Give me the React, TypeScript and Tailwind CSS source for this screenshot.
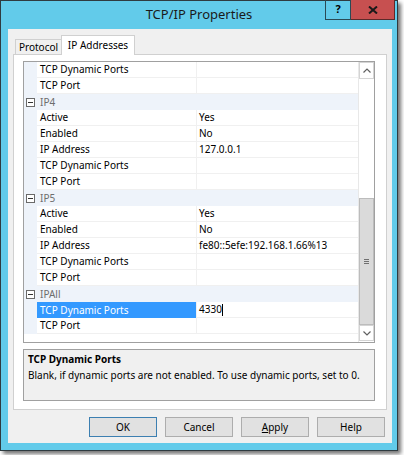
import React from "react";

type Row = { name?: string; value?: string; cat?: string; sel?: boolean };

const rows: Row[] = [
  { name: "TCP Dynamic Ports" },
  { name: "TCP Port" },
  { cat: "IP4" },
  { name: "Active", value: "Yes" },
  { name: "Enabled", value: "No" },
  { name: "IP Address", value: "127.0.0.1" },
  { name: "TCP Dynamic Ports" },
  { name: "TCP Port" },
  { cat: "IP5" },
  { name: "Active", value: "Yes" },
  { name: "Enabled", value: "No" },
  { name: "IP Address", value: "fe80::5efe:192.168.1.66%13" },
  { name: "TCP Dynamic Ports" },
  { name: "TCP Port" },
  { cat: "IPAll" },
  { name: "TCP Dynamic Ports", value: "4330", sel: true },
  { name: "TCP Port" },
];

function Chevron({ down }: { down?: boolean }) {
  return (
    <svg width="8" height="5" viewBox="0 0 8 5">
      <polyline
        points={down ? "0.5,0.5 4,4 7.5,0.5" : "0.5,4.5 4,1 7.5,4.5"}
        fill="none"
        stroke="#606060"
        strokeWidth="1.2"
      />
    </svg>
  );
}

function GridRow({ r }: { r: Row }) {
  if (r.cat) {
    return (
      <div className="flex h-[16px] bg-[#eef3fa] items-center">
        <div className="w-[13px] flex justify-center">
          <div className="w-[9px] h-[9px] border border-[#6a6a6a] bg-white flex items-center justify-center">
            <div className="w-[5px] h-px bg-[#333]" />
          </div>
        </div>
        <div className="pl-[3px] text-[#6d6d6d]">{r.cat}</div>
      </div>
    );
  }
  return (
    <div className="flex h-[16px]">
      <div className="w-[13px] bg-[#eef3fa]" />
      <div
        className={
          r.sel
            ? "w-[160px] pl-[3px] flex items-center bg-[#3399ff] text-white border-r border-[#f0f0f0]"
            : "w-[160px] pl-[3px] flex items-center border-b border-r border-[#f0f0f0]"
        }
      >
        {r.name}
      </div>
      <div className="flex-1 pl-[2px] flex items-center border-b border-[#f0f0f0]">
        {r.value}
        {r.sel && <span className="inline-block w-px h-[12px] bg-black" />}
      </div>
    </div>
  );
}

function Btn({ children, def }: { children: React.ReactNode; def?: boolean }) {
  return (
    <div
      className={
        def
          ? "w-[68px] h-[20px] flex items-center justify-center bg-[#e1e1e1] border border-[#3c7fb1]"
          : "w-[68px] h-[20px] flex items-center justify-center bg-[#e1e1e1] border border-[#adadad]"
      }
    >
      {children}
    </div>
  );
}

export default function App() {
  return (
    <div
      className="w-[404px] h-[455px] bg-white text-[10px] text-black"
      style={{ fontFamily: '"Noto Sans", sans-serif' }}
    >
      <div className="w-[398px] h-[451px] bg-[#62cbea] border border-[#2f3b40] shadow-[3px_3px_4px_rgba(0,0,0,0.55)] flex flex-col">
        {/* title bar */}
        <div className="h-[28px] flex items-start">
          <div className="w-[72px]" />
          <div className="flex-1 text-center text-[13px] text-[#1a1a1a] leading-[26px]">TCP/IP Properties</div>
          <div className="flex mr-[2px] -mt-px">
            <div className="w-[26px] h-[20px] border border-t-0 border-[#2a4a55] flex items-center justify-center font-bold text-[11px]">
              ?
            </div>
            <div className="w-[44px] h-[20px] bg-[#c75050] border-b border-r border-[#5c2a2a] flex items-center justify-center">
              <svg width="10" height="8" viewBox="0 0 10 8">
                <path d="M1 0.5 L9 7.5 M9 0.5 L1 7.5" stroke="#1a1a1a" strokeWidth="2" />
              </svg>
            </div>
          </div>
        </div>

        {/* client area */}
        <div className="ml-[7px] mr-[5px] mb-[7px] flex-1 bg-[#f0f0f0] flex flex-col pt-[6px]">
          {/* tabs */}
          <div className="h-[19px] flex items-end pl-[7px]">
            <div className="w-[47px] h-[15px] border border-b-0 border-[#d0d0d0] bg-[#f0f0f0] flex items-center justify-center">
              Protocol
            </div>
            <div className="w-[74px] h-[20px] -ml-px -mb-px relative z-10 border border-b-0 border-[#d0d0d0] bg-white flex items-center justify-center">
              IP Addresses
            </div>
          </div>

          {/* panel */}
          <div className="mx-[5px] h-[356px] border border-[#d0d0d0] bg-white pl-[9px] pt-[6px] flex flex-col gap-[6px]">
            {/* property grid */}
            <div className="w-[352px] h-[282px] border border-[#a0a0a0] flex">
              <div className="w-[334px] flex flex-col">
                {rows.map((r, i) => (
                  <GridRow key={i} r={r} />
                ))}
              </div>
              <div className="w-[16px] flex flex-col bg-white border-l border-[#e8e8e8]">
                <div className="h-[17px] border border-[#d4d4d4] flex items-center justify-center">
                  <Chevron />
                </div>
                <div className="h-[119px]" />
                <div className="h-[127px] bg-[#dadada] border border-[#bcbcbc] flex flex-col items-center justify-center gap-[1px]">
                  <div className="w-[5px] h-px bg-[#707070]" />
                  <div className="w-[5px] h-px bg-[#707070]" />
                  <div className="w-[5px] h-px bg-[#707070]" />
                </div>
                <div className="h-[16px] border border-[#d4d4d4] flex items-center justify-center">
                  <Chevron down />
                </div>
              </div>
            </div>

            {/* description */}
            <div className="w-[352px] h-[52px] border border-[#a0a0a0] bg-[#f0f0f0] pl-[4px] pt-[1px]">
              <div className="font-bold leading-[16px]">TCP Dynamic Ports</div>
              <div className="leading-[16px]">
                Blank, if dynamic ports are not enabled. To use dynamic ports, set to 0.
              </div>
            </div>
          </div>

          {/* buttons */}
          <div className="flex justify-end gap-[8px] pr-[7px] pt-[7px]">
            <Btn def>OK</Btn>
            <Btn>Cancel</Btn>
            <Btn>
              <span>
                <span className="underline">A</span>pply
              </span>
            </Btn>
            <Btn>Help</Btn>
          </div>
        </div>
      </div>
    </div>
  );
}
